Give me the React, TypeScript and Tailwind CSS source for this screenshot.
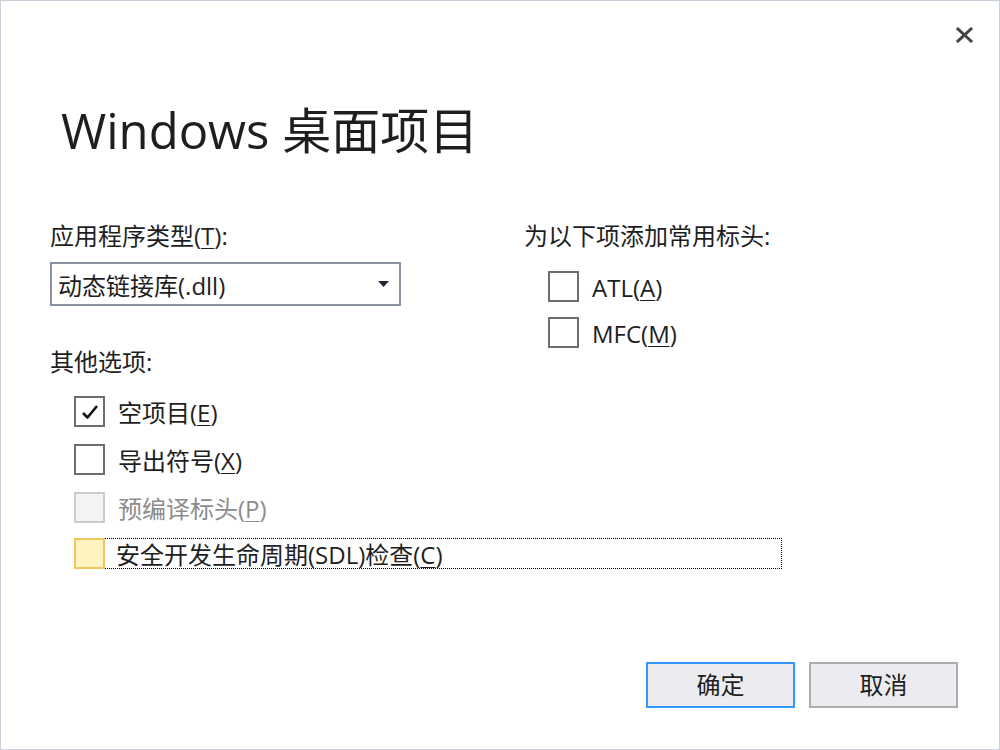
import React from "react";

const font = { fontFamily: '"Open Sans", "Noto Sans CJK SC", sans-serif' };

function Mn({ children }: { children: React.ReactNode }) {
  return <span className="underline underline-offset-[3px] decoration-1">{children}</span>;
}

function CheckBox({
  checked,
  disabled,
  focused,
}: {
  checked?: boolean;
  disabled?: boolean;
  focused?: boolean;
}) {
  let cls = "border-[#6e6e6e] bg-white";
  if (disabled) cls = "border-[#cccccc] bg-[#f3f3f3]";
  if (focused) cls = "border-[#f0c75e] bg-[#fff3c2]";
  return (
    <div className={`w-[31px] h-[31px] border-2 flex items-center justify-center shrink-0 ${cls}`}>
      {checked && (
        <svg width="18" height="16" viewBox="0 0 18 16">
          <path d="M2 9 L6.5 13.5 L16 2" fill="none" stroke="#111" strokeWidth="2.6" strokeLinejoin="round" />
        </svg>
      )}
    </div>
  );
}

function Option({
  label,
  checked,
  disabled,
}: {
  label: React.ReactNode;
  checked?: boolean;
  disabled?: boolean;
}) {
  return (
    <div className="flex items-center h-[31px] gap-[13px]">
      <CheckBox checked={checked} disabled={disabled} />
      <span className={`pt-[3px] ${disabled ? "text-[#8c8c8c]" : "text-[#1e1e1e]"}`}>{label}</span>
    </div>
  );
}

export default function App() {
  return (
    <div
      style={font}
      className="w-[1000px] h-[750px] bg-white border border-[#cccedb] flex flex-col text-[24px] leading-[30px] text-[#1e1e1e] overflow-hidden"
    >
      {/* Close */}
      <div className="flex justify-end pt-[26px] pr-[26px]">
        <svg width="17" height="16" viewBox="0 0 17 16">
          <path d="M2 2 L15 14 M15 2 L2 14" stroke="#444" strokeWidth="3" strokeLinecap="square" />
        </svg>
      </div>

      {/* Title */}
      <h1 className="pl-[60px] mt-[57px] text-[49px] leading-[60px] text-[#1e1e1e]">Windows 桌面项目</h1>

      {/* Body */}
      <div className="flex mt-[61px] pl-[49px]">
        <div className="w-[474px] flex flex-col">
          <div>
            应用程序类型(<Mn>T</Mn>):
          </div>
          <div className="mt-[11px] w-[351px] h-[44px] border-2 border-[#8b919f] flex items-center justify-between pl-[6px] pr-[10px]">
            <span className="pt-[3px]">动态链接库(.dll)</span>
            <svg width="11" height="6" viewBox="0 0 11 6">
              <path d="M0 0 H11 L5.5 6 Z" fill="#1e2733" />
            </svg>
          </div>
          <div className="mt-[41px]">其他选项:</div>
          <div className="mt-[19px] pl-[24px] flex flex-col gap-[17px]">
            <Option checked label={<>空项目(<Mn>E</Mn>)</>} />
            <Option label={<>导出符号(<Mn>X</Mn>)</>} />
            <Option disabled label={<>预编译标头(<Mn>P</Mn>)</>} />
          </div>
          <div className="mt-[15px] ml-[24px] w-[708px] h-[31px] border border-dotted border-black flex items-center gap-[12px]">
            <div className="-m-px">
              <CheckBox focused />
            </div>
            <span className="pt-[3px]">
              安全开发生命周期(SDL)检查(<Mn>C</Mn>)
            </span>
          </div>
        </div>

        <div className="flex flex-col">
          <div>为以下项添加常用标头:</div>
          <div className="mt-[20px] pl-[24px] flex flex-col gap-[15px]">
            <Option label={<>ATL(<Mn>A</Mn>)</>} />
            <Option label={<>MFC(<Mn>M</Mn>)</>} />
          </div>
        </div>
      </div>

      {/* Footer */}
      <div className="mt-auto flex justify-end gap-[14px] pr-[41px] pb-[41px]">
        <button className="w-[149px] h-[46px] border-2 border-[#3399ff] bg-[#ececf0] text-[24px]">确定</button>
        <button className="w-[149px] h-[46px] border-2 border-[#adadad] bg-[#ececf0] text-[24px]">取消</button>
      </div>
    </div>
  );
}
